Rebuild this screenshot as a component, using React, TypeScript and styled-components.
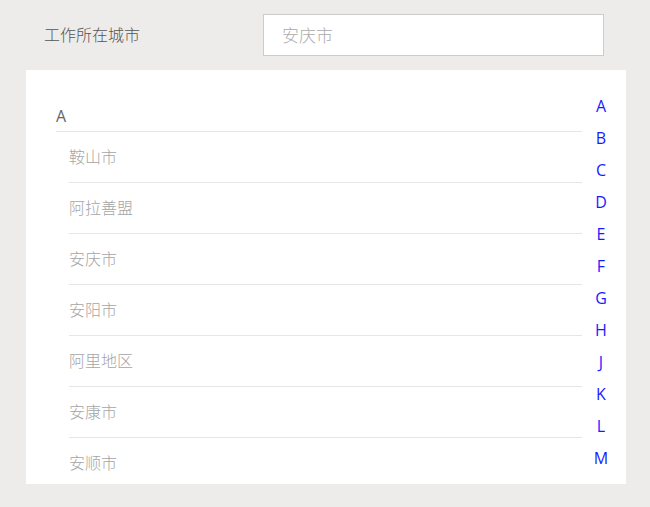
import React from 'react'
import styled, { createGlobalStyle } from 'styled-components'

const GlobalStyle = createGlobalStyle`
  html, body {
    margin: 0;
    padding: 0;
    background: #edecea;
    font-family: 'Open Sans', 'Noto Sans CJK SC', sans-serif;
  }
`

const Page = styled.div`
  width: 650px;
  height: 507px;
  background: #edecea;
  overflow: hidden;
`

const TopBar = styled.div`
  display: flex;
  align-items: center;
  height: 70px;
  padding-left: 44px;
  box-sizing: border-box;
`

const Label = styled.div`
  width: 219px;
  margin-top: -3px;
  font-size: 16px;
  font-weight: 300;
  color: #555;
  font-family: 'Noto Sans CJK SC', sans-serif;
`

const CityInput = styled.div`
  width: 341px;
  height: 42px;
  box-sizing: border-box;
  border: 1px solid #ccc;
  background: #fff;
  display: flex;
  align-items: center;
  padding-left: 18px;
  padding-bottom: 1px;
  font-size: 17px;
  font-weight: 300;
  color: #aaa;
  font-family: 'Noto Sans CJK SC', sans-serif;
`

const Panel = styled.div`
  margin-left: 26px;
  width: 600px;
  height: 414px;
  background: #fff;
  display: flex;
  overflow: hidden;
`

const List = styled.div`
  width: 526px;
  margin-left: 30px;
  padding-top: 30px;
`

const GroupTitle = styled.div`
  height: 32px;
  box-sizing: border-box;
  padding-top: 2px;
  line-height: 29px;
  border-bottom: 1px solid #e6e6e6;
  font-size: 16px;
  color: #666;
`

const Item = styled.div`
  margin-left: 13px;
  height: 51px;
  box-sizing: border-box;
  line-height: 48px;
  padding-bottom: 2px;
  border-bottom: 1px solid #e6e6e6;
  font-size: 16px;
  font-weight: 300;
  color: #a5a5a5;
  font-family: 'Noto Sans CJK SC', sans-serif;
`

const IndexBar = styled.div`
  width: 38px;
  padding-top: 20px;
  display: flex;
  flex-direction: column;
  align-items: center;
`

const IndexLetter = styled.a`
  height: 32px;
  line-height: 32px;
  font-size: 16px;
  color: #1a1aff;
  text-decoration: none;
`

const cities = ['鞍山市', '阿拉善盟', '安庆市', '安阳市', '阿里地区', '安康市', '安顺市']
const letters = ['A', 'B', 'C', 'D', 'E', 'F', 'G', 'H', 'J', 'K', 'L', 'M']

export default function App() {
  return (
    <Page>
      <GlobalStyle />
      <TopBar>
        <Label>工作所在城市</Label>
        <CityInput>安庆市</CityInput>
      </TopBar>
      <Panel>
        <List>
          <GroupTitle>A</GroupTitle>
          {cities.map(c => (
            <Item key={c}>{c}</Item>
          ))}
        </List>
        <IndexBar>
          {letters.map(l => (
            <IndexLetter key={l}>{l}</IndexLetter>
          ))}
        </IndexBar>
      </Panel>
    </Page>
  )
}
